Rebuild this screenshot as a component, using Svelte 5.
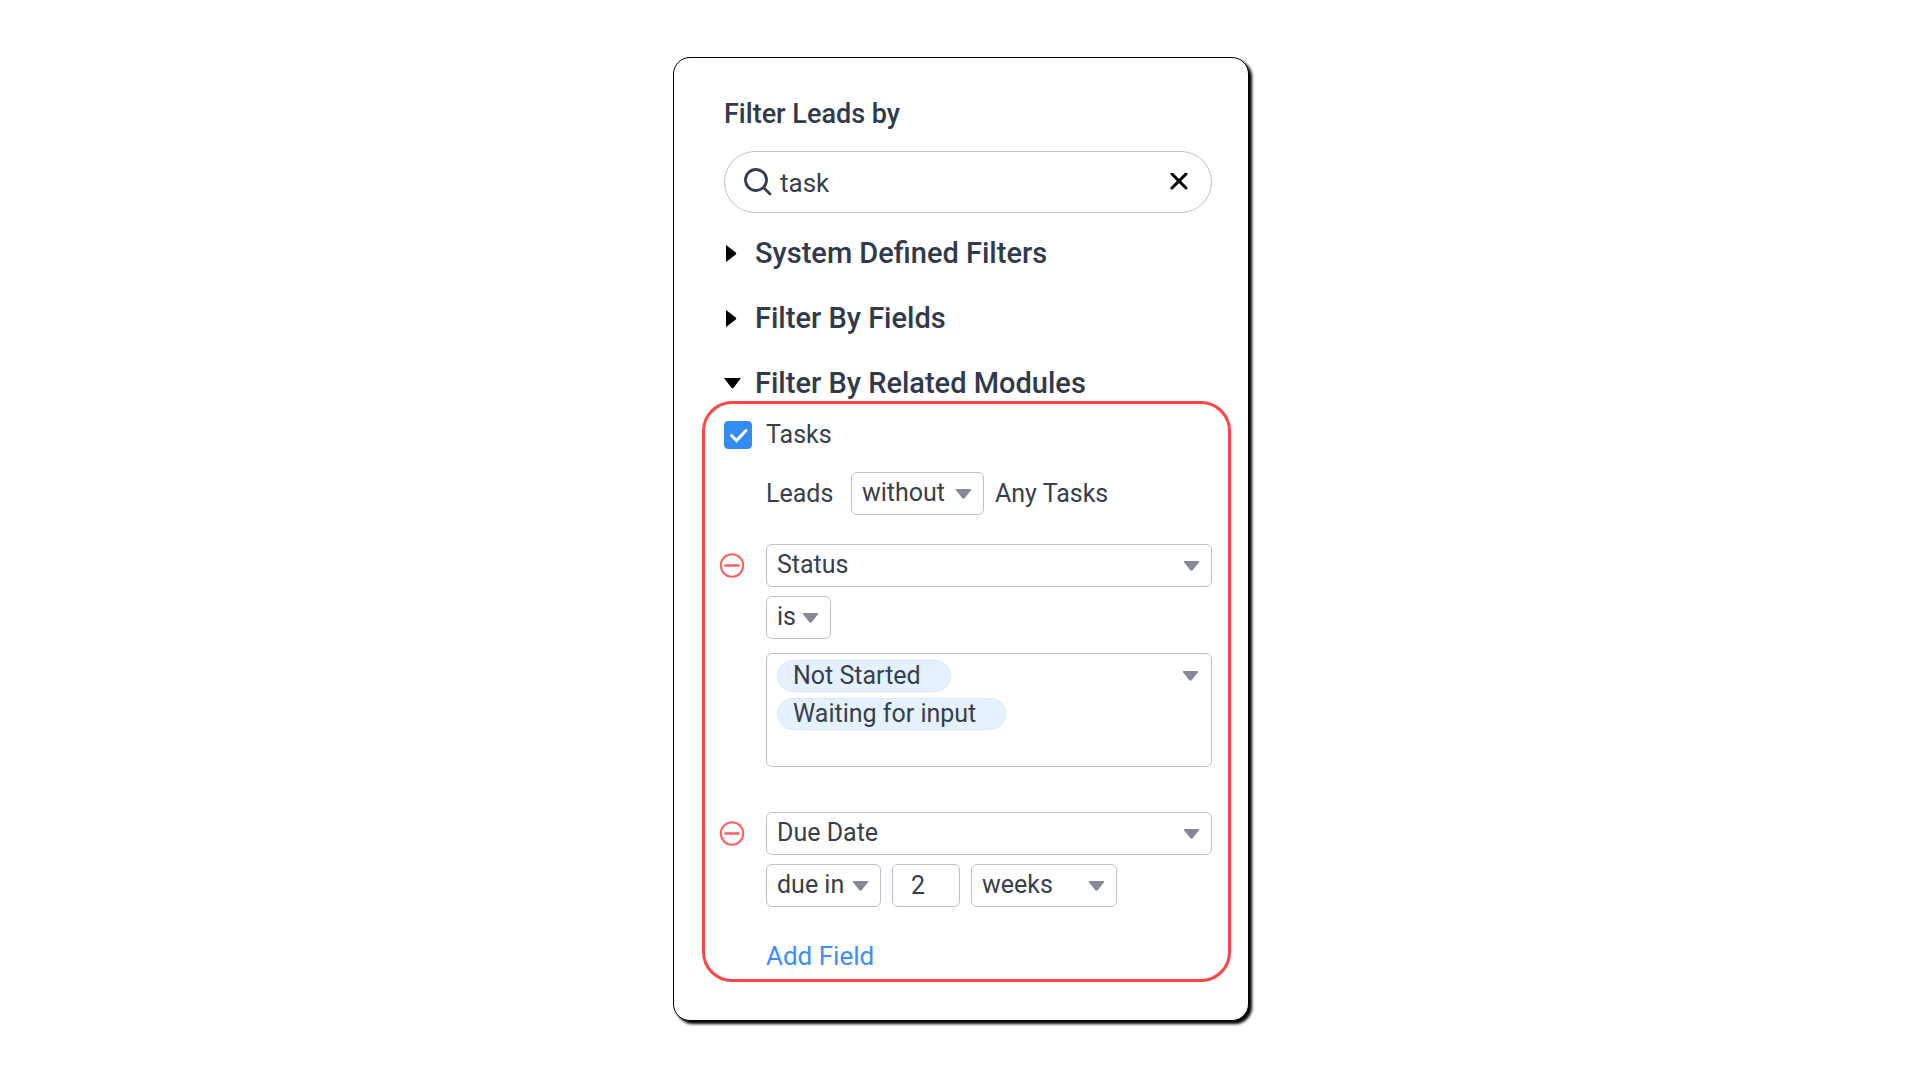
<script lang="ts">
	let search = $state("task");
	let tasksChecked = $state(true);
	let relation = $state("without");
	let amount = $state("2");
	let openSection = $state("Filter By Related Modules");

	const sections = [
		"System Defined Filters",
		"Filter By Fields",
		"Filter By Related Modules",
	];
	const statuses = ["Not Started", "Waiting for input"];

	function toggle(name: string) {
		openSection = openSection === name ? "" : name;
	}
</script>

{#snippet caret()}
	<svg class="caret" viewBox="0 0 16 10" aria-hidden="true">
		<path d="M1.5 0h13q1.8 0 1 1.3L9.300 9q-1.300 1.400-2.600 0L.5 1.300Q-.3 0 1.500 0z" fill="#858995" />
	</svg>
{/snippet}

{#snippet remove(label: string)}
	<button class="remove" aria-label={label}>
		<svg viewBox="0 0 26 26" fill="none" stroke="#ff5f5f" stroke-width="2">
			<circle cx="13" cy="12.500" r="11.200" />
			<path d="M6.500 12.500h13" stroke-width="2.600" stroke-linecap="round" />
		</svg>
	</button>
{/snippet}

<main>
	<div class="card">
		<div class="top">
			<h1>Filter Leads by</h1>

			<div class="search">
				<svg class="glass" viewBox="0 0 28 28" fill="none" stroke="#363f4f">
					<circle cx="12" cy="12" r="10.500" stroke-width="2.800" />
					<path d="M19.500 19.500l6.500 6.500" stroke-width="2.800" stroke-linecap="round" />
				</svg>
				<input type="text" aria-label="Search filters" bind:value={search} />
				<button class="clear" aria-label="Clear" onclick={() => (search = "")}>
					<svg viewBox="0 0 18 18" fill="none" stroke="#000" stroke-width="3" stroke-linecap="round">
						<path d="M2 1l14 14M16 1L2 15" />
					</svg>
				</button>
			</div>

			<div class="sections">
				{#each sections as name (name)}
					<button class="section" aria-expanded={openSection === name} onclick={() => toggle(name)}>
						<svg viewBox="0 0 18 18" aria-hidden="true">
							{#if openSection === name}
								<path d="M0 4h17l-7.200 9.500q-1.300 1.500-2.600 0z" />
							{:else}
								<path d="M2 1l9.500 7.200q1.500 1.300 0 2.600L2 18z" />
							{/if}
						</svg>
						{name}
					</button>
				{/each}
			</div>
		</div>

		<div class="module">
			<div class="row check-row">
				<span class="box">
					<input id="tasks" type="checkbox" bind:checked={tasksChecked} />
					<svg viewBox="0 0 28 28" fill="none" stroke="#fff" stroke-width="3" aria-hidden="true">
						<path d="M7.500 14.500l5 5L22 9.500" stroke-linecap="round" />
					</svg>
				</span>
				<label for="tasks">Tasks</label>
			</div>

			<div class="row relation">
				<div class="inline">
					<label for="relation">Leads</label>
					<span class="select without">
						<select id="relation" bind:value={relation}>
							<option>with</option>
							<option>without</option>
						</select>
						{@render caret()}
					</span>
					<span>Any Tasks</span>
				</div>
			</div>

			<div class="row">
				{@render remove("Remove Status")}
				<span class="select">
					<select aria-label="Field">
						<option>Status</option>
					</select>
					{@render caret()}
				</span>
			</div>
			<div class="row">
				<span class="select is">
					<select aria-label="Status condition">
						<option>is</option>
					</select>
					{@render caret()}
				</span>
			</div>
			<div class="row values">
				<button class="multi" aria-label="Status values" aria-haspopup="listbox">
					<span class="chips">
						{#each statuses as status (status)}
							<span class="chip">{status}</span>
						{/each}
					</span>
					{@render caret()}
				</button>
			</div>

			<div class="row">
				{@render remove("Remove Due Date")}
				<span class="select">
					<select aria-label="Field">
						<option>Due Date</option>
					</select>
					{@render caret()}
				</span>
			</div>
			<div class="row">
				<div class="inline">
					<span class="select due-in">
						<select aria-label="Due condition">
							<option>due in</option>
						</select>
						{@render caret()}
					</span>
					<input class="amount" type="text" aria-label="Amount" bind:value={amount} />
					<span class="select unit">
						<select aria-label="Unit">
							<option>weeks</option>
						</select>
						{@render caret()}
					</span>
				</div>
			</div>

			<div class="row last">
				<a class="add" href="#add">Add Field</a>
			</div>
		</div>
	</div>
</main>

<style>
	:global(body) {
		background: #fff;
	}

	main {
		display: flex;
		justify-content: center;
		padding: 57px 0 56px 2px;
		font-family: Roboto, "Noto Sans", sans-serif;
		font-size: 25px;
		font-weight: 370;
		line-height: 32px;
		color: #363f4b;
	}

	* {
		box-sizing: border-box;
	}

	button,
	input,
	select {
		font: inherit;
		color: inherit;
		margin: 0;
	}

	button {
		background: none;
		border: none;
		padding: 0;
		cursor: pointer;
	}

	svg {
		display: block;
	}

	.card {
		width: 30vw;
		min-width: 560px;
		padding: 40px 17px 38px 28px;
		background: #fff;
		border: 1px solid #000;
		border-radius: 17px;
		box-shadow: 3px 3px 3px #000;
	}

	.top {
		padding: 0 19px 0 22px;
	}

	h1 {
		margin: 0 0 21px;
		font-size: 27px;
		font-weight: 500;
		line-height: 32px;
		color: #313a4b;
	}

	.search {
		display: flex;
		align-items: center;
		height: 62px;
		padding: 0 23px 0 19px;
		border: 1px solid #bcc2c9;
		border-radius: 31px;
	}

	.glass {
		width: 28px;
		height: 28px;
	}

	.search input {
		flex: 1;
		min-width: 0;
		padding: 2px 8px 0;
		font-size: 26px;
		border: none;
		outline: none;
		background: none;
	}

	.clear svg {
		width: 18px;
		height: 18px;
	}

	.sections {
		display: flex;
		flex-direction: column;
		gap: 33px;
		padding: 24px 0 2px;
	}

	.section {
		display: flex;
		align-items: center;
		gap: 13px;
		font-size: 29px;
		font-weight: 500;
		line-height: 32px;
		color: #313a4b;
	}

	.section svg {
		width: 18px;
		height: 18px;
		fill: #000;
	}

	.module {
		display: flex;
		flex-direction: column;
		padding: 15px 16px 7px 14px;
		border: 3px solid #ff4545;
		border-radius: 30px;
	}

	.row {
		display: grid;
		grid-template-columns: 47px 1fr;
		align-items: center;
		margin-bottom: 9px;
	}

	.row > :only-child {
		grid-column: 2;
	}

	.check-row {
		margin-bottom: 21px;
	}

	.relation {
		margin-bottom: 29px;
	}

	.values {
		margin: 5px 0 45px;
	}

	.last {
		margin-bottom: 0;
	}

	.box {
		position: relative;
		width: 28px;
		height: 28px;
		margin-left: 5px;
	}

	.box input {
		display: block;
		appearance: none;
		width: 28px;
		height: 28px;
		border: 1px solid #bcc2c9;
		border-radius: 4px;
	}

	.box input:checked {
		background: #338cf0;
		border-color: #338cf0;
	}

	.box svg {
		position: absolute;
		inset: 0;
		pointer-events: none;
	}

	.inline {
		display: flex;
		align-items: center;
		gap: 11px;
	}

	.inline label {
		width: 74px;
	}

	.remove svg {
		width: 26px;
		height: 26px;
	}

	.select {
		position: relative;
		display: block;
	}

	select {
		display: block;
		appearance: none;
		width: 100%;
		height: 43px;
		padding: 0 10px 1px;
		border: 1px solid #bcc2c9;
		border-radius: 6px;
		background: #fff;
	}

	.caret {
		position: absolute;
		right: 12px;
		top: 17px;
		width: 17px;
		height: 10px;
		pointer-events: none;
	}

	.without {
		width: 133px;
	}

	.is {
		width: 65px;
	}

	.due-in {
		width: 115px;
	}

	.unit {
		width: 146px;
	}

	.amount {
		width: 68px;
		height: 43px;
		padding: 0 0 1px 18px;
		border: 1px solid #bcc2c9;
		border-radius: 6px;
	}

	.multi {
		position: relative;
		min-height: 114px;
		padding: 6px 10px;
		border: 1px solid #bcc2c9;
		border-radius: 6px;
	}

	.chips {
		display: flex;
		flex-direction: column;
		align-items: flex-start;
		gap: 6px;
		min-height: 100px;
	}

	.chip {
		padding: 0 29px 0 15px;
		border: 1px solid #d8e8fa;
		border-radius: 16px;
		background: #e5f1fe;
		line-height: 30px;
	}

	.add {
		margin-top: 24px;
		font-size: 26px;
		color: #3d8ff5;
		text-decoration: none;
	}
</style>
